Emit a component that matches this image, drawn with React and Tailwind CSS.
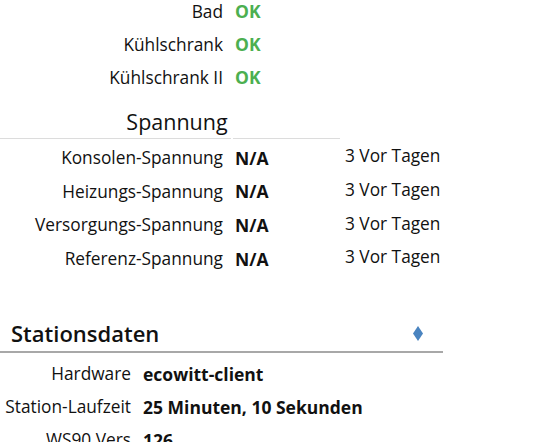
import React from 'react';

const statusRows = ['Bad', 'Kühlschrank', 'Kühlschrank II'];

const voltageRows = [
  'Konsolen-Spannung',
  'Heizungs-Spannung',
  'Versorgungs-Spannung',
  'Referenz-Spannung',
];

const stationRows = [
  { label: 'Hardware', value: 'ecowitt-client' },
  { label: 'Station-Laufzeit', value: '25 Minuten, 10 Sekunden' },
  { label: 'WS90 Vers', value: '126' },
];

function StatusRow({ label }) {
  return (
    <div className="flex items-center h-[33px]">
      <div className="w-[223px] text-right">{label}</div>
      <div className="ml-[12px] font-bold text-[17.5px] text-[#4caf50]">OK</div>
    </div>
  );
}

function VoltageRow({ label }) {
  return (
    <div className="flex items-center h-[33.7px]">
      <div className="w-[223px] text-right">{label}</div>
      <div className="ml-[12px] w-[110px] font-bold text-[17.5px]">N/A</div>
      <div className="-mt-[3px]">3 Vor Tagen</div>
    </div>
  );
}

function StationRow({ label, value }) {
  return (
    <div className="flex items-center h-[33px]">
      <div className="w-[131px] text-right">{label}</div>
      <div className="ml-[12px] font-bold text-[17.5px]">{value}</div>
    </div>
  );
}

export default function App() {
  return (
    <div
      className="w-[543px] h-[442px] overflow-hidden bg-white text-[17.3px] text-[#111]"
      style={{ fontFamily: '"Open Sans", "Liberation Sans", sans-serif' }}
    >
      <div className="-mt-[5px]">
        {statusRows.map((r) => (
          <StatusRow key={r} label={r} />
        ))}
      </div>

      <div className="mt-[11.5px] w-[340px]">
        <div className="text-center text-[21.5px] leading-[32px] pl-[14px]">Spannung</div>
        <div className="flex">
          <div className="w-[231px] h-px bg-[#dcdcdc]" />
          <div className="ml-[2px] flex-1 h-px bg-[#dcdcdc]" />
        </div>
      </div>

      <div className="mt-[2.5px]">
        {voltageRows.map((r) => (
          <VoltageRow key={r} label={r} />
        ))}
      </div>

      <div className="mt-[41px] w-[443px]">
        <div className="flex items-center justify-between h-[34px] pl-[11px] pr-[20px]">
          <div className="text-[22px] font-semibold">Stationsdaten</div>
          <svg width="10" height="15" viewBox="0 0 10 15">
            <polygon points="5,0 10,7.5 5,15 0,7.5" fill="#4a84c0" />
          </svg>
        </div>
        <div className="h-[2px] bg-[#a8a8a8]" />
      </div>

      <div className="mt-[4.5px]">
        {stationRows.map((r) => (
          <StationRow key={r.label} label={r.label} value={r.value} />
        ))}
      </div>
    </div>
  );
}
